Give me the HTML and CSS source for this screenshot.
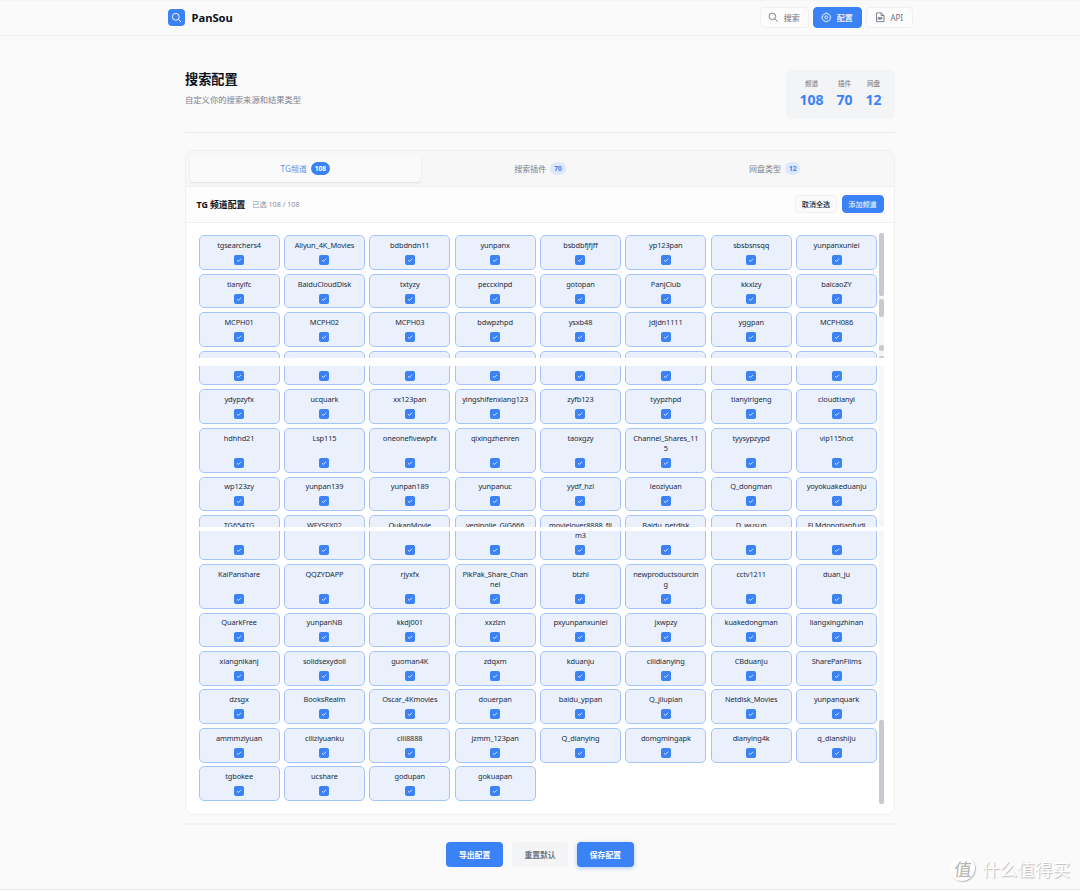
FILE: index.html
```
<!DOCTYPE html>
<html lang="zh-CN">
<head>
    <meta charset="UTF-8" />
    <meta name="viewport" content="width=device-width, initial-scale=1.0" />
    <title>PanSou</title>
    <link rel="stylesheet" href="styles.css">
</head>
<body>
    <header class="topbar">
        <div class="topbar-inner">
            <div class="brand">
                <span class="logo">
                    <svg viewBox="0 0 24 24"><circle cx="10.5" cy="10.5" r="7.5" /><path d="M16 16l6 6" /></svg>
                </span>
                <span>PanSou</span>
            </div>
            <nav class="nav">
                <button class="nav-btn">
                    <svg viewBox="0 0 24 24"><circle cx="10" cy="10" r="7.5" /><path d="M15.5 15.5l6.5 6.5" /></svg>
                    <span>搜索</span>
                </button>
                <button class="nav-btn active">
                    <svg viewBox="0 0 24 24"><path d="M10 2.5h4l1 2.500 2.500-.5 3 3-.5 2.500 2 1v3l-2 1 .5 2.500-3 3-2.500-.5-1 2.500h-4l-1-2.500-2.500.5-3-3 .5-2.500-2-1v-3l2-1-.5-2.500 3-3 2.500.5z" /><circle cx="12" cy="12.200" r="3.300" /></svg>
                    <span>配置</span>
                </button>
                <button class="nav-btn api">
                    <svg viewBox="0 0 24 24"><path d="M3.500 2h11l6 6v14h-17zM14 2v6h6M7.500 17.500v-5h3v5M7.500 15.500h3M13 17.500v-5h3v3h-3" /></svg>
                    <span>API</span>
                </button>
            </nav>
        </div>
    </header>

    <main class="page">
        <section class="page-head">
            <div>
                <h1>搜索配置</h1>
                <p>自定义你的搜索来源和结果类型</p>
            </div>
            <div class="stats">
                <div><span>频道</span><b>108</b></div>
                <div><span>插件</span><b>70</b></div>
                <div><span>网盘</span><b>12</b></div>
            </div>
        </section>

        <section class="panel">
            <div class="tabs">
                <div class="tab active">TG频道<span class="badge">108</span></div>
                <div class="tab">搜索插件<span class="badge">70</span></div>
                <div class="tab">网盘类型<span class="badge">12</span></div>
            </div>
            <div class="panel-head">
                <h2>TG 频道配置</h2>
                <span class="selected">已选 108 / 108</span>
                <button class="small-btn">取消全选</button>
                <button class="small-btn primary">添加频道</button>
            </div>
            <div class="list">
                <div class="grid" id="grid"></div>
                <div class="track">
                    <i class="thumb thumb-1"></i>
                    <i class="thumb thumb-2"></i>
                    <i class="thumb thumb-3"></i>
                    <i class="thumb thumb-4"></i>
                    <i class="thumb thumb-5"></i>
                </div>
                <div class="cut cut-1"></div>
                <div class="cut cut-2"></div>
            </div>
        </section>

        <footer class="actions">
            <button class="action">导出配置</button>
            <button class="action plain">重置默认</button>
            <button class="action save">保存配置</button>
        </footer>
    </main>

    <div class="watermark"><span class="mark">值</span><span>什么值得买</span></div>

    <script>
        // one entry per row, '-' is a card whose name is out of view
        const rows = [
            'tgsearchers4 Aliyun_4K_Movies bdbdndn11 yunpanx bsbdbfjfjff yp123pan sbsbsnsqq yunpanxunlei',
            'tianyifc BaiduCloudDisk txtyzy peccxinpd gotopan PanjClub kkxlzy baicaoZY',
            'MCPH01 MCPH02 MCPH03 bdwpzhpd ysxb48 jdjdn1111 yggpan MCPH086',
            '- - - - - - - -',
            'ydypzyfx ucquark xx123pan yingshifenxiang123 zyfb123 tyypzhpd tianyirigeng cloudtianyi',
            'hdhhd21 Lsp115 oneonefivewpfx qixingzhenren taoxgzy Channel_Shares_11|5 tyysypzypd vip115hot',
            'wp123zy yunpan139 yunpan189 yunpanuc yydf_hzl leoziyuan Q_dongman yoyokuakeduanju',
            'TG654TG WFYSFX02 OukanMovie yeqingjie_GJG666 movielover8888_fil|m3 Baidu_netdisk D_wusun FLMdongtianfudi',
            'KaiPanshare QQZYDAPP rjyxfx PikPak_Share_Chan|nel btzhi newproductsourcin|g cctv1211 duan_ju',
            'QuarkFree yunpanNB kkdj001 xxzlzn pxyunpanxunlei jxwpzy kuakedongman liangxingzhinan',
            'xiangnikanj solidsexydoll guoman4K zdqxm kduanju cilidianying CBduanju SharePanFilms',
            'dzsgx BooksRealm Oscar_4Kmovies douerpan baidu_yppan Q_jilupian Netdisk_Movies yunpanquark',
            'ammmziyuan ciliziyuanku cili8888 jzmm_123pan Q_dianying domgmingapk dianying4k q_dianshiju',
            'tgbokee ucshare godupan gokuapan'
        ];
        const check = '<span class="check"><svg viewBox="0 0 10 10"><path d="M3 5.200l1.400 1.300 2.700-2.800" /></svg></span>';

        document.querySelector('#grid').innerHTML = rows.join(' ').split(' ').map((name) => {
            const label = name === '-' ? '&nbsp;' : name.replace('|', '<br>');
            return `<div class="card"><span class="name">${label}</span>${check}</div>`;
        }).join('');
    </script>
</body>
</html>
```
FILE: styles.css
```
* {
    margin: 0;
    padding: 0;
    box-sizing: border-box;
}

body {
    height: 890px;
    position: relative;
    overflow: hidden;
    background: #fafafa;
    border-bottom: 1px solid #e9e9ea;
    color: #0b1020;
    font-family: 'Noto Sans', 'Noto Sans CJK SC', sans-serif;
    font-size: 8px;
}

button {
    font-family: inherit;
    border: none;
    white-space: nowrap;
}

svg {
    fill: none;
    stroke: currentColor;
    stroke-width: 2;
}

.topbar {
    height: 36px;
    border-top: 1px solid #f5f5f6;
    border-bottom: 1px solid #f0f0f1;
}

.topbar-inner {
    width: 745px;
    height: 33px;
    margin: 0 auto;
    display: flex;
    align-items: center;
    justify-content: space-between;
}

.brand {
    display: flex;
    align-items: center;
    gap: 7px;
    font-size: 11.2px;
    font-weight: 700;
}

.logo {
    width: 17px;
    height: 17px;
    display: flex;
    align-items: center;
    justify-content: center;
    border-radius: 4px;
    background: #3b82f6;
    color: #fff;
}

.logo svg {
    width: 11px;
    height: 11px;
}

.nav {
    display: flex;
    gap: 4px;
}

.nav-btn {
    width: 49px;
    height: 21px;
    display: flex;
    align-items: center;
    justify-content: center;
    gap: 5px;
    border: 1px solid #f0f0f1;
    border-radius: 4px;
    background: #fcfcfc;
    color: #6b7280;
    font-size: 8px;
}

.nav-btn svg {
    width: 10.500px;
    height: 10.500px;
}

.nav-btn.active {
    border-color: #3b82f6;
    background: #3b82f6;
    color: #fff;
    font-weight: 500;
}

.nav-btn.api {
    width: 47px;
}

.page {
    width: 710px;
    margin: 0 auto;
}

.page-head {
    height: 97px;
    padding-top: 34px;
    display: flex;
    justify-content: space-between;
    border-bottom: 1px solid #e8e9ee;
}

.page-head h1 {
    font-size: 13.2px;
    line-height: 18px;
    font-weight: 700;
}

.page-head p {
    margin-top: 6px;
    color: #7c828d;
    font-size: 8.3px;
    line-height: 12px;
}

.stats {
    width: 109px;
    height: 49px;
    padding-top: 8px;
    display: flex;
    justify-content: center;
    gap: 13px;
    border-radius: 6px;
    background: #f3f4f6;
    text-align: center;
}

.stats span {
    display: block;
    color: #6b7280;
    font-size: 6.6px;
    line-height: 11px;
}

.stats b {
    display: block;
    color: #3b82f6;
    font-size: 14px;
    line-height: 22px;
}

.panel {
    height: 665px;
    margin-top: 17px;
    border: 1px solid #f0f0f1;
    border-radius: 8px;
    background: #fff;
    overflow: hidden;
}

.tabs {
    height: 36px;
    padding: 4px;
    display: grid;
    grid-template-columns: repeat(3, 1fr);
    gap: 4px;
    border-bottom: 1px solid #f0f0f1;
    background: #f7f7f7;
}

.tab {
    height: 27px;
    display: flex;
    align-items: center;
    justify-content: center;
    gap: 4px;
    border-radius: 4px;
    color: #7c828d;
    font-size: 8px;
}

.tab.active {
    background: #fafafa;
    color: #5b91ee;
    box-shadow: 0 1px 2px rgba(0, 0, 0, 0.1);
}

.badge {
    padding: 0 4px;
    border-radius: 7px;
    background: #dce8fb;
    color: #3b82f6;
    font-size: 6.600px;
    line-height: 13px;
    font-weight: 700;
}

.tab.active .badge {
    background: #3b82f6;
    color: #fff;
}

.panel-head {
    height: 36px;
    padding: 0 10.500px 1px;
    display: flex;
    align-items: center;
    border-bottom: 1px solid #f0f0f1;
    background: #fdfdfd;
}

.panel-head h2 {
    font-size: 8.8px;
    font-weight: 700;
}

.selected {
    margin: 0 auto 0 7px;
    color: #8a8f99;
    font-size: 7.2px;
}

.small-btn {
    width: 42px;
    height: 18px;
    margin-left: 4.500px;
    border: 1px solid #f0f0f1;
    border-radius: 4px;
    background: #fafafa;
    color: #1f2430;
    font-size: 7.100px;
    font-weight: 500;
}

.small-btn.primary {
    border-color: #3b82f6;
    background: #3b82f6;
    color: #fff;
    font-weight: 400;
}

.list {
    height: 591px;
    padding: 10px;
    position: relative;
    display: flex;
}

.grid {
    width: 678.600px;
    margin: 2.400px 1.900px 0 2.500px;
    display: grid;
    flex: none;
    grid-template-columns: repeat(8, 1fr);
    align-content: start;
    gap: 3.850px 4.200px;
}

.card {
    padding: 3.900px 0 3.700px;
    display: flex;
    flex-direction: column;
    align-items: center;
    justify-content: space-between;
    border: 1px solid #a3c4fb;
    border-radius: 5px;
    background: #eaf1fd;
}

.name {
    margin-bottom: 4.750px;
    color: #222b3d;
    font-size: 7.400px;
    line-height: 10.300px;
    letter-spacing: -0.110px;
    text-align: center;
    white-space: nowrap;
}

.check {
    width: 10px;
    height: 10px;
    border-radius: 2px;
    background: #3b82f6;
    color: #fff;
}

.check svg {
    display: block;
    stroke-width: 0.800;
}

.track {
    width: 5px;
    height: 571px;
    position: relative;
    border-radius: 2px;
    background: #f6f6f7;
}

/* scrollbar thumbs */
.thumb {
    width: 100%;
    position: absolute;
    border-radius: 2px;
    background: #c9c9cf;
}

.thumb-1 {
    top: 0;
    height: 63px;
}

.thumb-2 {
    top: 65.500px;
    height: 18.500px;
}

.thumb-3 {
    top: 112px;
    height: 5.500px;
}

.thumb-4 {
    top: 122.500px;
    height: 6px;
}

.thumb-5 {
    bottom: 0;
    height: 84px;
}

/* seams across the long list */
.cut {
    position: absolute;
    left: 0;
    right: 0;
    background: #fff;
}

.cut-1 {
    top: 135px;
    height: 8px;
}

.cut-2 {
    top: 303.500px;
    height: 4px;
}

.actions {
    height: 66px;
    margin-top: 8px;
    padding-top: 17px;
    display: flex;
    justify-content: center;
    gap: 8.800px;
    border-top: 2px solid #f1f1f2;
}

.action {
    width: 56.600px;
    height: 25px;
    border-radius: 4px;
    background: #3b82f6;
    color: #fff;
    font-size: 7.800px;
    font-weight: 700;
}

.action.plain {
    background: #f3f4f6;
    color: #6b7280;
}

.action.save {
    box-shadow: 0 1px 4px rgba(59, 130, 246, 0.4);
}

.watermark {
    position: absolute;
    right: 10px;
    bottom: 8px;
    display: flex;
    align-items: center;
    gap: 7px;
    color: #fff;
    font-size: 17.600px;
    line-height: 24px;
    text-shadow: 1px 1px 1px #bbb;
}

.mark {
    width: 24px;
    height: 24px;
    border-radius: 50%;
    background: #fff;
    box-shadow: 1px 1px 1px #bbb;
    color: #b5b5b5;
    text-align: center;
    text-shadow: none;
    transform: skewX(-6deg);
}
```
